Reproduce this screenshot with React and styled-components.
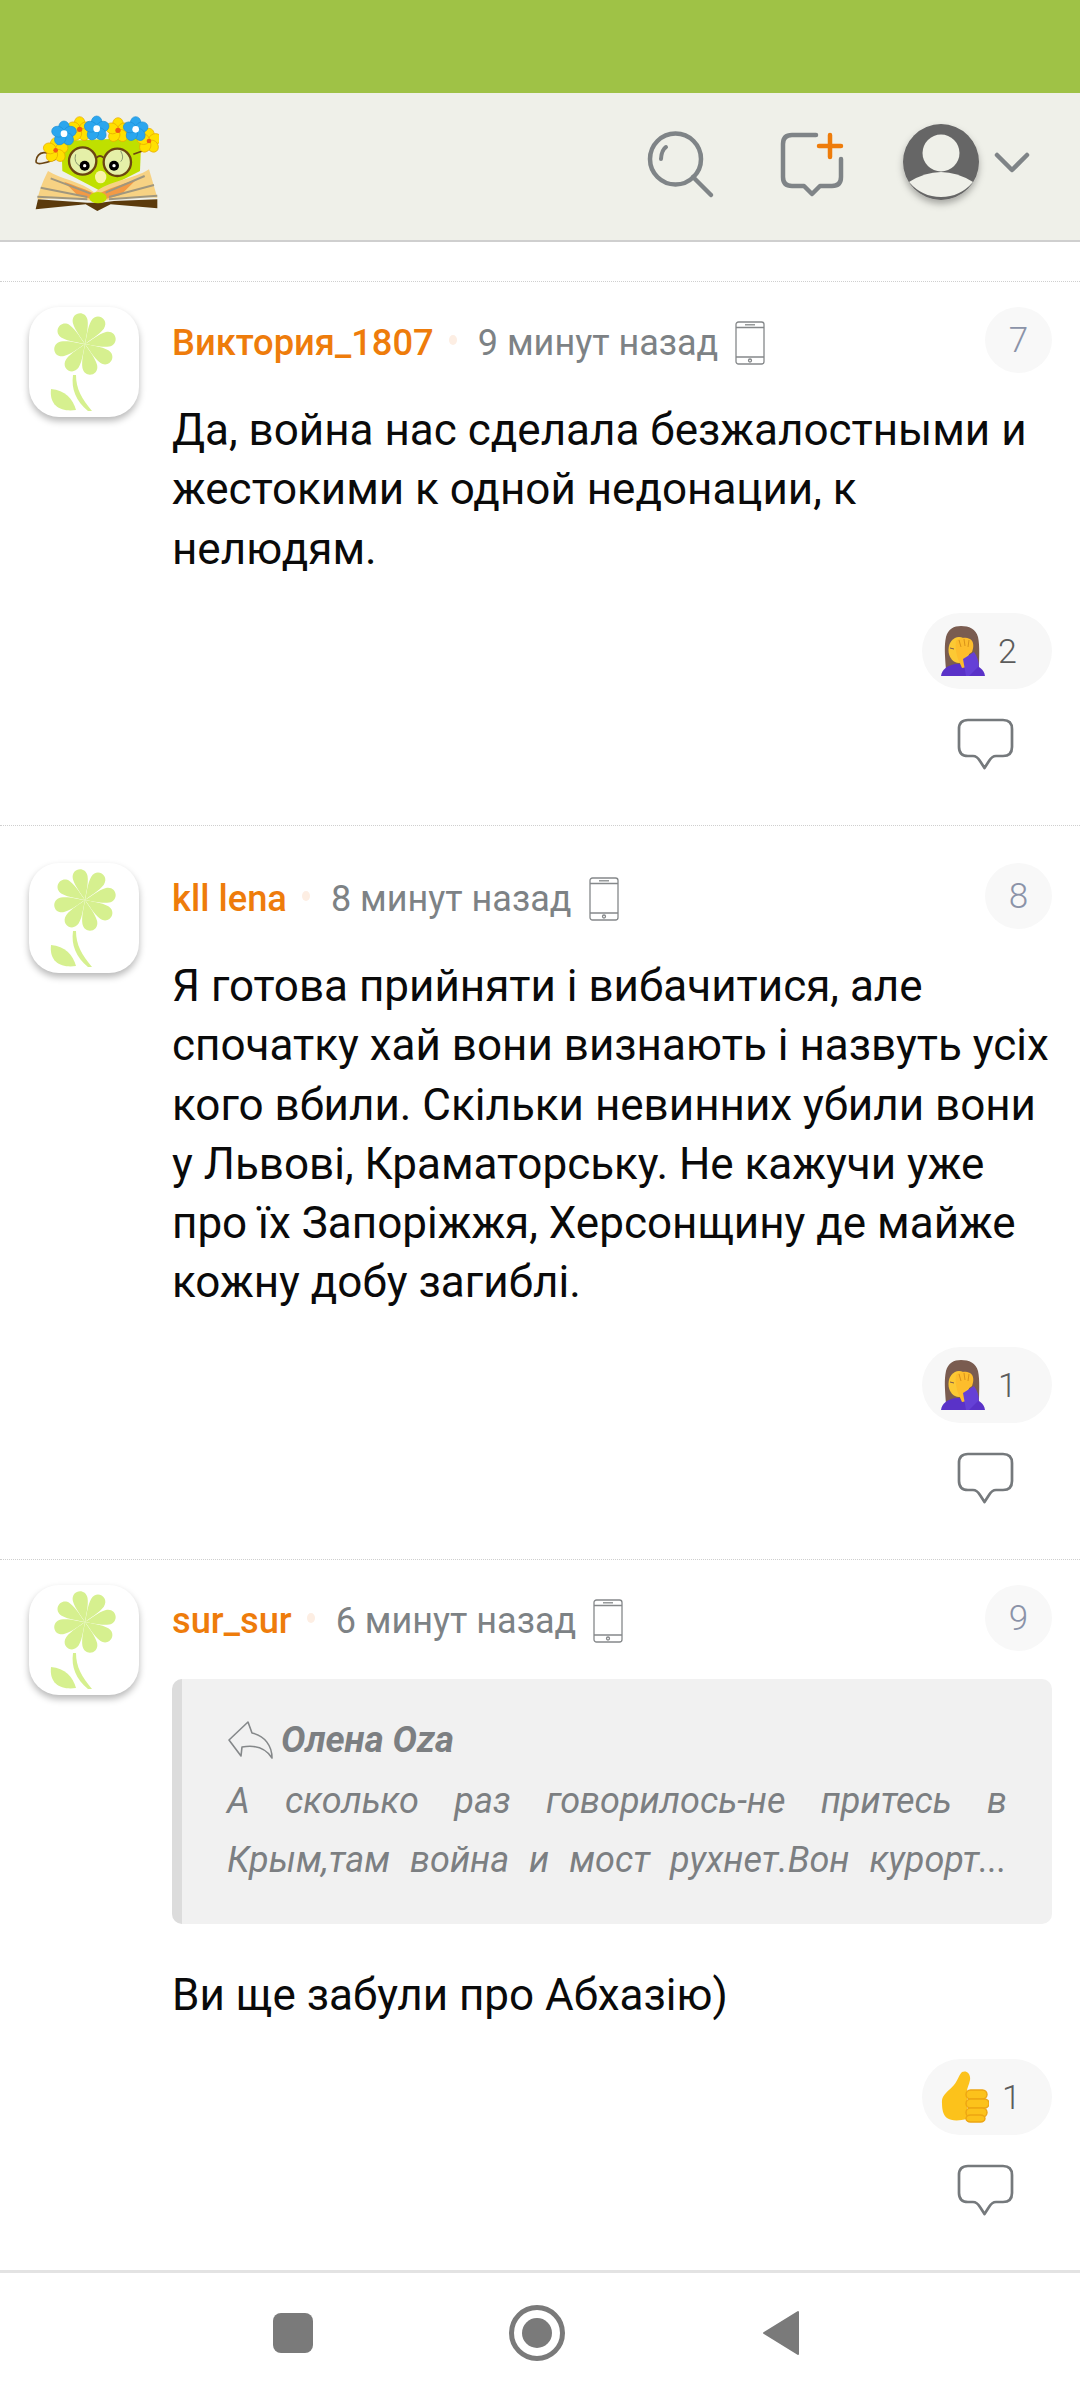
import React from "react";
import styled, { createGlobalStyle } from "styled-components";

const Global = createGlobalStyle`
  html, body { margin: 0; padding: 0; background: #fff; }
  body { font-family: Roboto, "Liberation Sans", sans-serif; }
  * { box-sizing: border-box; }
`;

const Page = styled.div`
  width: 1080px;
  height: 2400px;
  display: flex;
  flex-direction: column;
  overflow: hidden;
  background: #fff;
`;
const StatusBar = styled.div`
  height: 93px;
  background: #9fc246;
  flex: none;
`;
const Header = styled.header`
  height: 149px;
  flex: none;
  background: #eff0e9;
  border-bottom: 2px solid #cfcfcf;
  display: flex;
  align-items: flex-start;
  padding: 19px 0 0 34px;
`;
const HeaderActions = styled.div`
  margin-left: auto;
  display: flex;
  align-items: flex-start;
  padding-top: 9px;
  padding-right: 50px;
`;
const Feed = styled.main`
  flex: 1;
  padding-top: 39px;
  display: flex;
  flex-direction: column;
`;
const Comment = styled.article`
  height: ${(p) => p.$height}px;
  border-top: 1px dotted #cfcfcf;
  padding: ${(p) => p.$top}px 28px 0 29px;
  display: grid;
  grid-template-columns: 110px 1fr;
  column-gap: 33px;
  align-content: start;
`;
const Avatar = styled.div`
  width: 110px;
  height: 110px;
  border-radius: 30px;
  background: #fff;
  box-shadow: 0 4px 7px rgba(0, 0, 0, 0.28);
  display: flex;
`;
const Column = styled.div`
  display: flex;
  flex-direction: column;
  min-width: 0;
`;
const Meta = styled.div`
  height: 66px;
  display: flex;
  align-items: center;
  padding-top: 5px;
`;
const Name = styled.span`
  font-size: 36.3px;
  font-weight: 500;
  color: #ee7c0b;
`;
const Dot = styled.span`
  width: 8px;
  height: 10px;
  margin: -6px 21px 0 15px;
  border-radius: 50%;
  background: #fdeee3;
`;
const Time = styled.span`
  font-size: 36px;
  color: #7d8285;
`;
const DeviceIcon = styled.svg`
  width: 30px;
  height: 44px;
  margin-left: 17px;
  flex: none;
`;
const Badge = styled.span`
  margin-left: auto;
  width: 67px;
  height: 66px;
  margin-top: -5px;
  border-radius: 50%;
  background: #f8f8f8;
  color: #8b93a8;
  font-size: 35px;
  font-weight: 300;
  display: flex;
  align-items: center;
  justify-content: center;
`;
const Body = styled.p`
  margin: 0;
  padding-top: ${(p) => p.$top || 0}px;
  font-size: 44px;
  line-height: 59.3px;
  color: #0a0a0a;
`;
const Quote = styled.blockquote`
  margin: 28px 0 0;
  height: 245px;
  background: #f1f1f1;
  border-left: 10px solid #dcdcdc;
  border-radius: 10px;
  padding: 34px 45px 0 45px;
  color: #7c7f82;
  font-style: italic;
  line-height: 59px;
`;
const QuoteAuthor = styled.div`
  display: flex;
  align-items: center;
  font-weight: 700;
  font-size: 36.5px;
  gap: 8px;
  margin: -3px 0 3px;
`;
const QuoteText = styled.div`
  text-align: justify;
  text-align-last: justify;
  font-size: 36px;
`;
const Footer = styled.div`
  display: flex;
  flex-direction: column;
  align-items: flex-end;
  margin-top: ${(p) => p.$top}px;
`;
const Pill = styled.div`
  width: 130px;
  height: 76px;
  border-radius: 38px;
  background: #f7f7f7;
  display: flex;
  align-items: center;
  padding-left: 19px;
  gap: 13px;
  color: #5c5c5c;
  font-size: 34px;
  font-weight: 300;
`;
const ReplyIcon = styled.svg`
  width: 60px;
  height: 54px;
  margin: 29px 36px 0 0;
`;
const Nav = styled.nav`
  height: 130px;
  flex: none;
  border-top: 3px solid #e3e3e3;
  display: flex;
  justify-content: center;
  align-items: center;
  padding: 0 6px 8px 0;
`;
const NavItem = styled.div`
  width: 244px;
  display: flex;
  justify-content: center;
`;

const CrownFlower = ({ x, y, fill, stroke, center, r }) => (
  <g transform={`translate(${x} ${y})`}>
    {[0, 72, 144, 216, 288].map((a) => (
      <ellipse key={a} cx="0" cy="-19" rx="16" ry="19" fill={fill} stroke={stroke} strokeWidth="2" transform={`rotate(${a})`} />
    ))}
    <circle r={r} fill={center} />
  </g>
);

const Logo = () => (
  <svg width="125" height="102" viewBox="40 63 375 306">
    <path d="M122 150 L362 140 L358 240 L240 300 L125 240 Z" fill="#bfe000" />
    <path d="M45 355 L52 325 L200 335 L240 335 L280 330 L410 325 L410 352 L270 340 L230 360 L195 340 Z" fill="#5b3a0c" />
    <path d="M50 325 C60 285 70 265 82 240 C120 265 180 270 222 305 C260 270 340 265 385 235 L410 320 C340 315 280 320 232 335 C180 320 110 320 50 325 Z" fill="#f7d283" />
    <path d="M130 272 C165 285 200 295 228 312 C260 295 300 280 345 268 L300 312 L232 330 L170 312 Z" fill="#f39a45" />
    <g stroke="#a0977e" strokeWidth="6" fill="none">
      <path d="M60 290 L200 318" /><path d="M50 317 L200 325" /><path d="M90 262 L210 308" />
      <path d="M400 282 L265 318" /><path d="M410 314 L265 325" /><path d="M372 255 L255 305" />
    </g>
    <ellipse cx="232" cy="320" rx="26" ry="17" fill="#c2e000" />
    <ellipse cx="240" cy="258" rx="17" ry="19" fill="#faf3a6" />
    <path d="M104 205 C85 175 50 180 46 210 C44 225 80 215 105 205" fill="none" stroke="#6b4512" strokeWidth="5" />
    <path d="M338 190 L380 175" stroke="#6b4512" strokeWidth="5" />
    <circle cx="186" cy="210" r="41" fill="#e5f0a8" stroke="#6b4512" strokeWidth="7" />
    <circle cx="290" cy="214" r="41" fill="#e5f0a8" stroke="#6b4512" strokeWidth="7" />
    <path d="M228 200 Q238 190 248 200" fill="none" stroke="#6b4512" strokeWidth="6" />
    <path d="M165 190 Q158 215 178 225 M300 180 Q312 200 300 212" fill="none" stroke="#8a9a70" strokeWidth="3" />
    <circle cx="192" cy="224" r="15" fill="#000" /><circle cx="192" cy="224" r="5" fill="#fff" />
    <circle cx="280" cy="224" r="15" fill="#000" /><circle cx="280" cy="224" r="5" fill="#fff" />
    <CrownFlower x={105} y={178} fill="#ffe000" stroke="#e8a800" center="#f15a12" r="7" />
    <CrownFlower x={385} y={150} fill="#ffe000" stroke="#e8a800" center="#f15a12" r="7" />
    <CrownFlower x={177} y={115} fill="#ffe000" stroke="#e8a800" center="#f15a12" r="8" />
    <CrownFlower x={292} y={118} fill="#ffe000" stroke="#e8a800" center="#f15a12" r="8" />
    <CrownFlower x={130} y={128} fill="#2ba6ee" stroke="#1e8fd6" center="#fff" r="10" />
    <CrownFlower x={228} y={113} fill="#2ba6ee" stroke="#1e8fd6" center="#fff" r="10" />
    <CrownFlower x={345} y={115} fill="#2ba6ee" stroke="#1e8fd6" center="#fff" r="10" />
  </svg>
);

const SearchIcon = () => (
  <svg width="76" height="76" viewBox="0 0 76 76" fill="none" stroke="#7f8487" strokeWidth="4.5" strokeLinecap="round" style={{ marginTop: 8, marginRight: 58 }}>
    <circle cx="29.5" cy="30" r="25.5" />
    <path d="M47 48 L65 66" />
    <path d="M15 30 Q15.5 21 20 18" strokeWidth="4" />
  </svg>
);

const ComposeIcon = () => (
  <svg width="64" height="66" viewBox="0 0 64 66" fill="none" strokeLinecap="round" style={{ marginTop: 11, marginRight: 58 }}>
    <path d="M36 3 H12 Q3 3 3 12 V45 Q3 54 12 54 H24 L32 62 L40 54 H52 Q61 54 61 45 V27" stroke="#7f8487" strokeWidth="4.5" strokeLinejoin="round" />
    <path d="M50 3 V25 M39 14 H61" stroke="#ee7c0b" strokeWidth="4.5" />
  </svg>
);

const AccountIcon = () => (
  <svg width="92" height="92" viewBox="0 0 92 92" style={{ margin: "-1px -7px 0 -7px" }}>
    <defs>
      <filter id="as" x="-20%" y="-20%" width="140%" height="140%">
        <feDropShadow dx="0" dy="4" stdDeviation="3.5" floodColor="#000" floodOpacity="0.3" />
      </filter>
    </defs>
    <circle cx="46" cy="42" r="38" fill="#666" filter="url(#as)" />
    <circle cx="46" cy="33" r="18.5" fill="#eff0e9" />
    <path d="M14 62 Q46 42 78 62 Q65 77 46 77 Q27 77 14 62 Z" fill="#eff0e9" />
  </svg>
);

const ChevronIcon = () => (
  <svg width="36" height="24" viewBox="0 0 36 24" fill="none" stroke="#7f8487" strokeWidth="4.5" strokeLinecap="round" strokeLinejoin="round" style={{ marginTop: 30, marginLeft: 14 }}>
    <path d="M3 4 L18 19 L33 4" />
  </svg>
);

const Flower = () => (
  <svg width="110" height="110" viewBox="0 0 110 110">
    {[-12, 33, 78, 123, 168, 213, 258, 303].map((a) => (
      <path key={a} transform={`rotate(${a} 56 37)`} d="M56 37 C54 31 49 22 48.5 14 C48.5 3 63.5 3 63.5 14 C63 22 58 31 56 37 Z" fill="#d6f08f" />
    ))}
    <path d="M44 68 C42 82 47 94 59 104 L63 104 C53 92 47 82 47 68 Z" fill="#d6f08f" />
    <path d="M22 82 C36 83 44 92 47 103 C33 105 20 100 22 82 Z" fill="#d6f08f" />
  </svg>
);

const Device = () => (
  <DeviceIcon viewBox="0 0 30 44" fill="none" stroke="#85888a" strokeWidth="1.3">
    <rect x="1" y="1" width="28" height="42" rx="2.5" />
    <path d="M1 6.5 H29 M1 36 H29" />
    <path d="M10 3.8 H20" />
    <circle cx="15" cy="39.5" r="1.5" />
  </DeviceIcon>
);

const Facepalm = () => (
  <svg width="44" height="50" viewBox="0 0 44 50">
    <path d="M5 44 C4 30 3 20 5 11 C7 3 13 0 20 0 C28 0 35 3 37 11 C39 20 38 32 38 44 Z" fill="#7a5c50" />
    <path d="M0 50 C1 43 6 40 14 38 L30 38 C38 40 43 43 44 50 Z" fill="#5a32c8" />
    <ellipse cx="18" cy="24" rx="10.5" ry="13" fill="#fcc934" />
    <path d="M15 15 C18 11 25 11 29 13 C33 15 33 21 31 26 L24 31 L26 41 L21 42 L17 33 C15 27 14 21 15 15 Z" fill="#fdbd2c" />
    <path d="M22 33 L33 26 C36 30 38 36 38 40 L28 50 L25 50 Z" fill="#6540d6" />
    <path d="M18 14 L20 21 M23 13 L24 20 M28 14 L27 21" stroke="#d9931a" strokeWidth="1" />
    <path d="M9 22 L13 23" stroke="#7a5c50" strokeWidth="1" />
  </svg>
);

const ThumbsUp = () => (
  <svg width="48" height="52" viewBox="0 0 48 52">
    <path d="M1 32 C0 24 8 20 13 14 C17 9 18 4 21 1 C25 -1 30 2 29 9 C28 14 26 17 26 20 L26 48 C18 50 10 50 6 47 C2 44 1 38 1 32 Z" fill="#fcc21b" />
    {[[19, 9], [28, 9], [37, 9], [44, 7]].map(([y, h], i) => (
      <rect key={i} x="25" y={y} width={i === 3 ? 19 : 21 + (i === 1 ? 2 : 0)} height={h} rx="4.5" fill="#fcc21b" stroke="#eda512" strokeWidth="1.4" />
    ))}
  </svg>
);

const Reply = () => (
  <ReplyIcon viewBox="0 0 60 54" fill="none" stroke="#75797c" strokeWidth="2.7" strokeLinejoin="round">
    <path d="M12 2 H47 Q56 2 56 11 V29 Q56 38 47 38 H40 Q36 38 33 43 L28.5 50 L24 43 Q21 38 17 38 H12 Q3 38 3 29 V11 Q3 2 12 2 Z" />
  </ReplyIcon>
);

const Arrow = () => (
  <svg width="46" height="40" viewBox="0 0 46 40" fill="none" stroke="#85888a" strokeWidth="1.6" strokeLinejoin="round">
    <path d="M21 2 L2 20 L14 36 L15 27 C26 25 38 27 45 38 C45 26 38 16 25 13 Z" />
  </svg>
);

const Reaction = ({ icon, count }) => (
  <Pill>
    {icon}
    <span>{count}</span>
  </Pill>
);

const Head = ({ name, time, num }) => (
  <Meta>
    <Name>{name}</Name>
    <Dot />
    <Time>{time}</Time>
    <Device />
    <Badge>{num}</Badge>
  </Meta>
);

export default function App() {
  return (
    <Page>
      <Global />
      <StatusBar />
      <Header>
        <Logo />
        <HeaderActions>
          <SearchIcon />
          <ComposeIcon />
          <AccountIcon />
          <ChevronIcon />
        </HeaderActions>
      </Header>
      <Feed>
        <Comment $height={544} $top={25}>
          <Avatar><Flower /></Avatar>
          <Column>
            <Head name="Виктория_1807" time="9 минут назад" num="7" />
            <Body $top={28}>Да, война нас сделала безжалостными и жестокими к одной недонации, к нелюдям.</Body>
            <Footer $top={34}>
              <Reaction icon={<Facepalm />} count="2" />
              <Reply />
            </Footer>
          </Column>
        </Comment>
        <Comment $height={734} $top={37}>
          <Avatar><Flower /></Avatar>
          <Column>
            <Head name="kll lena" time="8 минут назад" num="8" />
            <Body $top={28}>Я готова прийняти і вибачитися, але спочатку хай вони визнають і назвуть усіх кого вбили. Скільки невинних убили вони у Львові, Краматорську. Не кажучи уже про їх Запоріжжя, Херсонщину де майже кожну добу загиблі.</Body>
            <Footer $top={34}>
              <Reaction icon={<Facepalm />} count="1" />
              <Reply />
            </Footer>
          </Column>
        </Comment>
        <Comment $height={711} $top={25}>
          <Avatar><Flower /></Avatar>
          <Column>
            <Head name="sur_sur" time="6 минут назад" num="9" />
            <Quote>
              <QuoteAuthor><Arrow />Олена Oza</QuoteAuthor>
              <QuoteText>А сколько раз говорилось-не притесь в Крым,там война и мост рухнет.Вон курорт...</QuoteText>
            </Quote>
            <Body $top={42}>Ви ще забули про Абхазію)</Body>
            <Footer $top={34}>
              <Reaction icon={<ThumbsUp />} count="1" />
              <Reply />
            </Footer>
          </Column>
        </Comment>
      </Feed>
      <Nav>
        <NavItem>
          <svg width="40" height="40" viewBox="0 0 40 40"><rect width="40" height="40" rx="8" fill="#7a7a7a" /></svg>
        </NavItem>
        <NavItem>
          <svg width="56" height="56" viewBox="0 0 56 56" fill="none"><circle cx="28" cy="28" r="25.5" stroke="#7a7a7a" strokeWidth="5" /><circle cx="28" cy="28" r="15" fill="#7a7a7a" /></svg>
        </NavItem>
        <NavItem>
          <svg width="38" height="46" viewBox="0 0 38 46"><path d="M36 2 V44 L2 23 Z" fill="#7a7a7a" stroke="#7a7a7a" strokeWidth="2" strokeLinejoin="round" /></svg>
        </NavItem>
      </Nav>
    </Page>
  );
}
